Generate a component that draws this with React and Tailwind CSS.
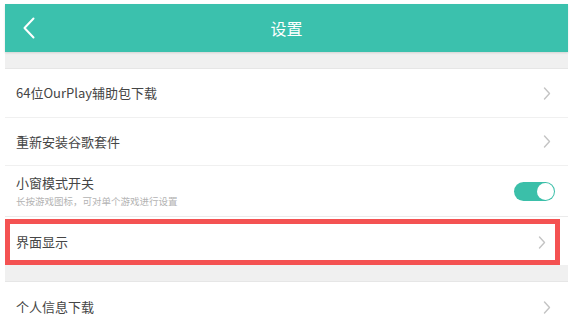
const font = { fontFamily: '"Noto Sans CJK SC", "Noto Sans", sans-serif' }

function Chevron() {
  return (
    <svg width="8" height="13" viewBox="0 0 8 13" className="shrink-0">
      <polyline points="1.5,1 6.5,6.5 1.5,12" fill="none" stroke="#c4c4c4" strokeWidth="1.4" strokeLinecap="round" strokeLinejoin="round" />
    </svg>
  )
}

function Row({ title, sub, right, className = '' }) {
  return (
    <div className={`flex items-center justify-between pl-[11px] pr-[17px] bg-white ${className}`}>
      <div className="flex flex-col">
        <span className="text-[13px] leading-[16px] text-[#454545]">{title}</span>
        {sub && <span className="text-[9.5px] leading-[12px] mt-[4px] text-[#b3b3b3]">{sub}</span>}
      </div>
      {right || <Chevron />}
    </div>
  )
}

function Toggle() {
  return (
    <div className="mr-[-4px] w-[41px] h-[19px] rounded-full bg-[#3bbfa9] flex items-center justify-end pr-[1px]">
      <div className="w-[17px] h-[17px] rounded-full bg-white" />
    </div>
  )
}

export default function App() {
  return (
    <div className="w-[571px] h-[315px] overflow-hidden bg-white pt-[4px] pl-[5px] pr-[3px]" style={font}>
      <div className="h-[48px] bg-[#3bc1ad] flex items-center relative shadow-[0_1px_2px_rgba(0,0,0,0.12)]">
        <svg width="14" height="22" viewBox="0 0 14 22" className="ml-[17px]">
          <polyline points="11.5,1.5 2.5,11 11.5,20.5" fill="none" stroke="#fff" strokeWidth="2" strokeLinecap="round" strokeLinejoin="round" />
        </svg>
        <span className="absolute left-0 right-0 text-center text-[16px] text-white pointer-events-none">设置</span>
      </div>
      <div className="h-[17px] bg-[#f0f0f0] border-b border-[#e6e6e6]" />
      <Row title="64位OurPlay辅助包下载" className="h-[49px] border-b border-[#f0f0f0]" />
      <Row title="重新安装谷歌套件" className="h-[48px] border-b border-[#f0f0f0]" />
      <Row title="小窗模式开关" sub="长按游戏图标，可对单个游戏进行设置" right={<Toggle />} className="h-[51px] border-b border-[#ebebeb]" />
      <div className="h-[48px] bg-white pt-[2px]">
        <div className="h-[46px] mr-[8px] border-[5px] border-[#f45252] flex items-center justify-between pl-[6px] pr-[9px]">
          <span className="text-[13px] leading-[16px] text-[#454545]">界面显示</span>
          <Chevron />
        </div>
      </div>
      <div className="h-[17px] bg-[#f0f0f0] border-b border-[#e6e6e6]" />
      <Row title="个人信息下载" className="h-[50px]" />
    </div>
  )
}
